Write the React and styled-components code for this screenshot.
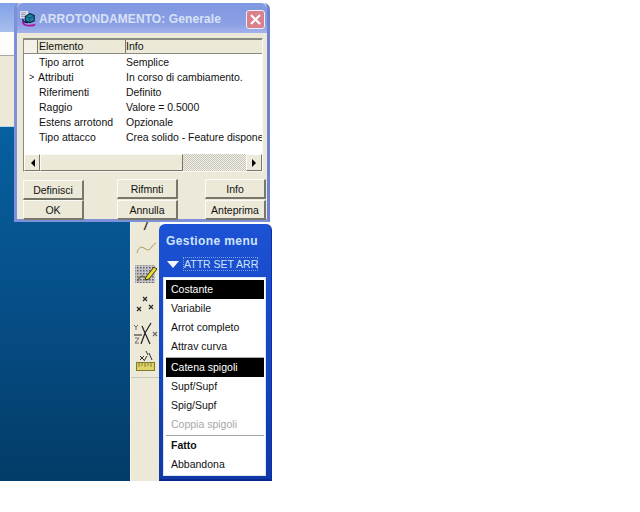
import React from 'react';
import styled, { createGlobalStyle } from 'styled-components';

const rows = [
  { name: 'Tipo arrot', info: 'Semplice' },
  { name: 'Attributi', info: 'In corso di cambiamento.', current: true },
  { name: 'Riferimenti', info: 'Definito' },
  { name: 'Raggio', info: 'Valore = 0.5000' },
  { name: 'Estens arrotond', info: 'Opzionale' },
  { name: 'Tipo attacco', info: 'Crea solido - Feature dispone' },
];

const buttonGroups = [
  { labels: ['Definisci', 'OK'], lowered: true },
  { labels: ['Rifmnti', 'Annulla'] },
  { labels: ['Info', 'Anteprima'] },
];

const menuGroups = [
  [
    { label: 'Costante', selected: true },
    { label: 'Variabile' },
    { label: 'Arrot completo' },
    { label: 'Attrav curva' },
  ],
  [
    { label: 'Catena spigoli', selected: true },
    { label: 'Supf/Supf' },
    { label: 'Spig/Supf' },
    { label: 'Coppia spigoli', disabled: true },
  ],
  [{ label: 'Fatto', bold: true }, { label: 'Abbandona' }],
];

function AppIcon() {
  return (
    <svg width='16' height='16' viewBox='0 0 18 18'>
      <rect x='0' y='0' width='9' height='8' fill='#dfe2ec' />
      <path d='M1 2h6M1 4h5M1 6h6' stroke='#8890a8' strokeWidth='1' />
      <path d='M6 6l5-3 5 2v6l-5 2-5-2z' fill='#1c86a8' stroke='#08283c' strokeWidth='1.2' />
      <path d='M11 8v5M6 6l5 2 5-2' stroke='#0c3c58' strokeWidth='0.8' fill='none' />
      <path d='M3 12c0 3 4 4.5 8 4.5 3 0 5-.5 6-1.5' stroke='#b0109a' strokeWidth='2' fill='none' />
      <path d='M3 9c0 2 2 4 6 4' stroke='#180850' strokeWidth='1.4' fill='none' />
    </svg>
  );
}

function CurveIcon() {
  return (
    <svg width='24' height='16' viewBox='0 0 24 16'>
      <path d='M3 13c1-5 4-7 7-5s5 3 7 0 3-4 5-5' stroke='#a89a5c' strokeWidth='1' fill='none' />
    </svg>
  );
}

function SketchIcon() {
  return (
    <svg width='24' height='20' viewBox='0 0 24 20'>
      <defs>
        <pattern id='dots' width='3' height='3' patternUnits='userSpaceOnUse'>
          <rect width='3' height='3' fill='#c4c4c8' />
          <rect width='1.5' height='1.5' fill='#606068' />
        </pattern>
      </defs>
      <rect x='1' y='1' width='20' height='18' fill='url(#dots)' />
      <path d='M4 17c1-5 5-6 8-3' stroke='#6a6a40' strokeWidth='1.4' fill='none' />
      <path d='M12 13l8-10 3 2-8 10-4 1z' fill='#e8dc30' stroke='#383810' strokeWidth='1' />
    </svg>
  );
}

function PointsIcon() {
  return (
    <svg width='20' height='18' viewBox='0 0 20 18' stroke='#2a2a26' strokeWidth='1.2' fill='none'>
      <path d='M7 1l4 4M11 1L7 5M1 11l4 4M5 11l-4 4M13 9l4 4M17 9l-4 4' />
    </svg>
  );
}

function AxesIcon() {
  return (
    <svg width='26' height='24' viewBox='0 0 26 24' fill='none'>
      <path d='M18 1l-6 10-3-7M12 11L8 22M12 11l5 11' stroke='#202020' strokeWidth='1.2' />
      <path d='M1 13h8' stroke='#202020' strokeWidth='1' />
      <path d='M1 3l2 2 2-2M3 5v3' stroke='#6a6a70' strokeWidth='1' />
      <path d='M20 10l4 4M24 10l-4 4' stroke='#6a6a70' strokeWidth='1.2' />
      <path d='M2 16h4l-4 5h4' stroke='#6a6a70' strokeWidth='1' />
    </svg>
  );
}

function RulerIcon() {
  return (
    <svg width='24' height='22' viewBox='0 0 24 22' fill='none'>
      <path d='M12 1l2 4M15 3l3 7M6 6l4 4M10 6l-4 4M13 6l-3 5' stroke='#30302c' strokeWidth='1' />
      <rect x='2.5' y='12.5' width='18' height='8' fill='#e0d468' stroke='#807830' />
      <path d='M5 13v4M8 13v3M11 13v4M14 13v3M17 13v4' stroke='#807830' strokeWidth='1' />
    </svg>
  );
}

export default function App() {
  return (
    <>
      <GlobalStyle />
      <Stage>
        <AppTitleStrip />
        <WhiteBand />
        <BeigeBand />
        <Lower>
          <Desktop />
          <Toolbar>
            <Tick>/</Tick>
            <ToolIcon $gap={9}>
              <CurveIcon />
            </ToolIcon>
            <ToolIcon $gap={8}>
              <SketchIcon />
            </ToolIcon>
            <ToolIcon $gap={12}>
              <PointsIcon />
            </ToolIcon>
            <ToolIcon $gap={8}>
              <AxesIcon />
            </ToolIcon>
            <ToolIcon $gap={4}>
              <RulerIcon />
            </ToolIcon>
            <ToolbarRule />
          </Toolbar>
        </Lower>

        <Dialog>
          <TitleBar>
            <AppIcon />
            <TitleText>ARROTONDAMENTO: Generale</TitleText>
            <CloseButton>
              <svg width='13' height='13' viewBox='0 0 13 13'>
                <path d='M2 2l9 9M11 2l-9 9' stroke='#fff' strokeWidth='2.2' />
              </svg>
            </CloseButton>
          </TitleBar>
          <DialogBody>
            <ListBox>
              <ListHeader>
                <HeaderCell />
                <HeaderCell>Elemento</HeaderCell>
                <HeaderCell $info>Info</HeaderCell>
              </ListHeader>
              <ListRows>
                {rows.map((row) => (
                  <ListRow key={row.name}>
                    <Marker>{row.current ? '>' : ''}</Marker>
                    <NameCell $current={row.current}>{row.name}</NameCell>
                    <InfoCell>{row.info}</InfoCell>
                  </ListRow>
                ))}
              </ListRows>
              <ScrollBar>
                <ScrollButton>
                  <svg width='5' height='8' viewBox='0 0 5 8'>
                    <path d='M5 0v8L1 4z' fill='#000' />
                  </svg>
                </ScrollButton>
                <ScrollThumb />
                <ScrollTrack />
                <ScrollButton>
                  <svg width='5' height='8' viewBox='0 0 5 8'>
                    <path d='M0 0v8l4-4z' fill='#000' />
                  </svg>
                </ScrollButton>
              </ScrollBar>
            </ListBox>
            <ButtonRow>
              {buttonGroups.map((group) => (
                <ButtonGroup key={group.labels[0]} $lowered={group.lowered}>
                  {group.labels.map((label) => (
                    <DialogButton key={label}>{label}</DialogButton>
                  ))}
                </ButtonGroup>
              ))}
            </ButtonRow>
          </DialogBody>
        </Dialog>

        <Menu>
          <MenuTitle>Gestione menu</MenuTitle>
          <SubHeader>
            <Triangle />
            <SubHeaderLabel>ATTR SET ARR</SubHeaderLabel>
          </SubHeader>
          <MenuList>
            {menuGroups.map((group) => (
              <MenuGroup key={group[0].label}>
                {group.map((item) => (
                  <MenuItem
                    key={item.label}
                    $selected={item.selected}
                    $disabled={item.disabled}
                    $bold={item.bold}
                  >
                    {item.label}
                  </MenuItem>
                ))}
              </MenuGroup>
            ))}
          </MenuList>
        </Menu>
      </Stage>
    </>
  );
}

const GlobalStyle = createGlobalStyle`
  html, body {
    margin: 0;
    background: #fff;
  }
  * {
    box-sizing: border-box;
  }
`;

const Stage = styled.div`
  position: relative;
  display: flex;
  flex-direction: column;
  width: 160px;
  height: 481px;
  padding-top: 3px;
  font-family: 'Liberation Sans', Arial, sans-serif;
  font-size: 10.5px;
  color: #111;
`;

const AppTitleStrip = styled.div`
  height: 29px;
  background: linear-gradient(#7fa2e6, #a9bfee);
`;

const WhiteBand = styled.div`
  height: 24px;
  background: #fdfdfb;
  border-bottom: 1px solid #a8a8a0;
`;

const BeigeBand = styled.div`
  height: 71px;
  background: #ece9d8;
  border-bottom: 1px solid #b8d8f0;
`;

const Lower = styled.div`
  flex: 1;
  display: flex;
`;

const Desktop = styled.div`
  width: 130px;
  background: linear-gradient(#07609f, #06508a 45%, #033c68);
`;

const Toolbar = styled.div`
  width: 30px;
  padding-top: 96px;
  display: flex;
  flex-direction: column;
  align-items: center;
  background: #ece9d8;
  border-left: 1px solid #f6f4ea;
`;

const Tick = styled.span`
  height: 8px;
  line-height: 6px;
  font-size: 11px;
  font-style: italic;
  font-weight: bold;
  color: #222;
`;

const ToolIcon = styled.div`
  display: flex;
  margin-top: ${(p) => p.$gap}px;
`;

const ToolbarRule = styled.div`
  align-self: stretch;
  margin-top: 5px;
  border-top: 1px solid #c8c6b6;
`;

const Dialog = styled.div`
  position: absolute;
  left: 14px;
  top: 3px;
  width: 256px;
  height: 219px;
  display: flex;
  flex-direction: column;
  background: #ece9d8;
  border: 3px solid #7e90da;
  border-top: 0;
  border-right-color: #6f82d0;
  border-radius: 6px 6px 0 0;
`;

const TitleBar = styled.div`
  height: 30px;
  flex: none;
  display: flex;
  align-items: center;
  gap: 3px;
  padding: 2px 2px 0 3px;
  background: linear-gradient(#7f98e2, #8b9fe4 70%, #a3b3ea);
  border-radius: 6px 6px 0 0;
`;

const TitleText = styled.span`
  flex: 1;
  font-size: 12px;
  font-weight: bold;
  letter-spacing: 0.1px;
  white-space: nowrap;
  color: #d8e2f6;
`;

const CloseButton = styled.div`
  width: 19px;
  height: 19px;
  display: flex;
  align-items: center;
  justify-content: center;
  background: #d9808c;
  border: 1px solid #eef0f8;
  border-radius: 3px;
`;

const DialogBody = styled.div`
  flex: 1;
  display: flex;
  flex-direction: column;
  padding: 5px 0 0 6px;
`;

const ListBox = styled.div`
  width: 240px;
  height: 134px;
  flex: none;
  display: flex;
  flex-direction: column;
  background: #fff;
  border: 1px solid #8a8a80;
  border-right-color: #f8f8f2;
  border-bottom-color: #f8f8f2;
`;

const ListHeader = styled.div`
  display: grid;
  grid-template-columns: 13px 88px 1fr;
  height: 15px;
  flex: none;
  background: #ece9d8;
  border-top: 1px solid #8a8a80;
  border-bottom: 1px solid #8a8a80;
`;

const HeaderCell = styled.div`
  padding-left: ${(p) => (p.$info ? '0' : '1px')};
  line-height: 13px;
  border-left: 1px solid #77776c;
  &:first-child {
    border-left: 0;
    background: #f4f2e8;
  }
`;

const ListRows = styled.div`
  flex: 1;
  padding-top: 1px;
`;

const ListRow = styled.div`
  display: grid;
  grid-template-columns: 13px 88px 1fr;
  height: 15px;
  line-height: 15px;
  white-space: nowrap;
  overflow: hidden;
`;

const Marker = styled.span`
  padding-left: 5px;
  font-size: 9px;
`;

const NameCell = styled.span`
  padding-left: ${(p) => (p.$current ? '1px' : '2px')};
`;

const InfoCell = styled.span`
  padding-left: 1px;
  letter-spacing: -0.03px;
  overflow: hidden;
`;

const ScrollBar = styled.div`
  display: flex;
  height: 17px;
  flex: none;
  background: #ece9d8;
`;

const ScrollButton = styled.div`
  width: 16px;
  display: flex;
  align-items: center;
  justify-content: center;
  background: #ece9d8;
  border: 1px solid #fff;
  border-right-color: #77776c;
  border-bottom-color: #77776c;
`;

const ScrollThumb = styled.div`
  width: 143px;
  background: #ece9d8;
  border: 1px solid #fbfbf6;
  border-right-color: #77776c;
  border-bottom-color: #77776c;
`;

const ScrollTrack = styled.div`
  flex: 1;
  background: repeating-conic-gradient(#c8c6ba 0 25%, #f2f0e6 0 50%) 0 0 / 2px 2px;
`;

const ButtonRow = styled.div`
  display: grid;
  grid-template-columns: 94px 88px 62px;
  margin-top: 7px;
`;

const ButtonGroup = styled.div`
  display: flex;
  flex-direction: column;
  padding-top: ${(p) => (p.$lowered ? '1px' : '0')};
  gap: ${(p) => (p.$lowered ? '0' : '1px')};
`;

const DialogButton = styled.div`
  width: 61px;
  height: 20px;
  line-height: 18px;
  text-align: center;
  background: #ece9d8;
  border: 1px solid #fbfbf6;
  border-right: 2px solid #77776c;
  border-bottom: 2px solid #77776c;
`;

const Menu = styled.div`
  position: absolute;
  left: 159px;
  top: 224px;
  width: 113px;
  height: 257px;
  display: flex;
  flex-direction: column;
  padding: 0 5px 3px 4px;
  background: linear-gradient(#1c52d4, #1546c4 50%, #0f38a8);
  border-bottom: 2px solid #0b2890;
  border-right: 1px solid #0f2fa0;
  border-radius: 6px 6px 0 0;
`;

const MenuTitle = styled.div`
  height: 29px;
  flex: none;
  padding: 10px 0 0 3px;
  font-size: 12px;
  font-weight: bold;
  letter-spacing: 0.4px;
  white-space: nowrap;
  color: #cfe4fa;
`;

const SubHeader = styled.div`
  height: 24px;
  flex: none;
  display: flex;
  align-items: flex-start;
  gap: 4px;
  padding: 4px 0 0 4px;
`;

const Triangle = styled.span`
  margin-top: 4px;
  width: 0;
  height: 0;
  border-left: 6px solid transparent;
  border-right: 6px solid transparent;
  border-top: 7px solid #f4f8ff;
`;

const SubHeaderLabel = styled.span`
  width: 75px;
  height: 14px;
  line-height: 13px;
  text-align: center;
  white-space: nowrap;
  color: #cfe4fa;
  border: 1px dotted #7aa2e8;
`;

const MenuList = styled.div`
  flex: 1;
  padding: 2px 1px 0 2px;
  background: #fff;
  border: 1px solid #dde4f4;
`;

const MenuGroup = styled.div`
  padding-bottom: 1px;
  border-bottom: 1px solid #a8a8a8;
  &:last-child {
    border-bottom: 0;
  }
`;

const MenuItem = styled.div`
  height: 19px;
  line-height: 19px;
  padding-left: 5px;
  white-space: nowrap;
  font-weight: ${(p) => (p.$bold ? 'bold' : 'normal')};
  background: ${(p) => (p.$selected ? '#000' : 'transparent')};
  color: ${(p) => (p.$selected ? '#fff' : p.$disabled ? '#a8a8a8' : '#111')};
`;
